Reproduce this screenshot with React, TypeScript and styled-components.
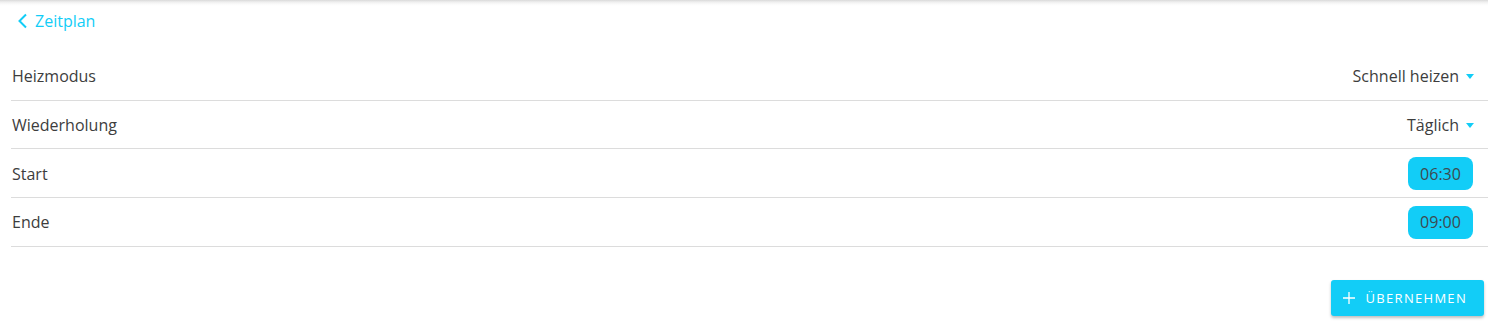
import React from "react";
import styled, { createGlobalStyle } from "styled-components";

const Global = createGlobalStyle`
  html, body { margin: 0; padding: 0; background: #fff; }
  body { font-family: "Open Sans", "Noto Sans", sans-serif; color: #3a3a3a; }
`;

const CYAN = "#12cdf7";

const Page = styled.div`
  width: 1488px;
  height: 324px;
  box-sizing: border-box;
  background: linear-gradient(to bottom, #d9d9d9 0px, #efefef 2px, #fafafa 4px, #fff 6px);
  display: flex;
  flex-direction: column;
`;

const BackLink = styled.a`
  display: flex;
  align-items: center;
  gap: 6px;
  padding: 10px 0 0 17px;
  height: 22px;
  color: ${CYAN};
  font-size: 16px;
  text-decoration: none;
  cursor: pointer;
`;

const List = styled.div`
  margin: 20px 0 0 11px;
  display: flex;
  flex-direction: column;
`;

const Row = styled.div`
  display: flex;
  align-items: center;
  justify-content: space-between;
  height: 47.67px;
  padding: 1px 14px 0 1px;
  box-sizing: content-box;
  height: 46.67px;
  border-bottom: 1px solid #dcdcdc;
  font-size: 16px;
  color: #3d3d3d;
`;

const Select = styled.div`
  display: flex;
  align-items: center;
  gap: 7px;
`;

const Caret = styled.span`
  width: 0;
  height: 0;
  border-left: 4.5px solid transparent;
  border-right: 4.5px solid transparent;
  border-top: 5px solid ${CYAN};
  margin-top: 1px;
`;

const TimeChip = styled.div`
  background: ${CYAN};
  border-radius: 8px;
  width: 65px;
  height: 33px;
  display: flex;
  align-items: center;
  justify-content: center;
  font-size: 16px;
  color: #3d4a50;
  margin-right: 1px;
`;

const Footer = styled.div`
  display: flex;
  justify-content: flex-end;
  padding: 33px 4px 0 0;
`;

const Button = styled.button`
  display: flex;
  align-items: center;
  gap: 11px;
  height: 36px;
  padding: 0 17px 0 12px;
  background: ${CYAN};
  color: #fff;
  border: none;
  border-radius: 3px;
  box-shadow: 0 2px 3px rgba(0, 0, 0, 0.25);
  font-family: "Open Sans", "Noto Sans", sans-serif;
  font-size: 13px;
  letter-spacing: 1.3px;
  cursor: pointer;
`;

export default function App() {
  return (
    <>
      <Global />
      <Page>
        <BackLink>
          <svg width="12" height="16" viewBox="0 0 12 16">
            <path d="M9 1.5 L2.5 8 L9 14.5" fill="none" stroke={CYAN} strokeWidth="2" />
          </svg>
          Zeitplan
        </BackLink>
        <List>
          <Row>
            <span>Heizmodus</span>
            <Select>
              Schnell heizen <Caret />
            </Select>
          </Row>
          <Row>
            <span>Wiederholung</span>
            <Select>
              Täglich <Caret />
            </Select>
          </Row>
          <Row>
            <span>Start</span>
            <TimeChip>06:30</TimeChip>
          </Row>
          <Row>
            <span>Ende</span>
            <TimeChip>09:00</TimeChip>
          </Row>
        </List>
        <Footer>
          <Button>
            <svg width="12" height="12" viewBox="0 0 12 12">
              <path d="M6 0 V12 M0 6 H12" stroke="#fff" strokeWidth="1.3" />
            </svg>
            ÜBERNEHMEN
          </Button>
        </Footer>
      </Page>
    </>
  );
}
